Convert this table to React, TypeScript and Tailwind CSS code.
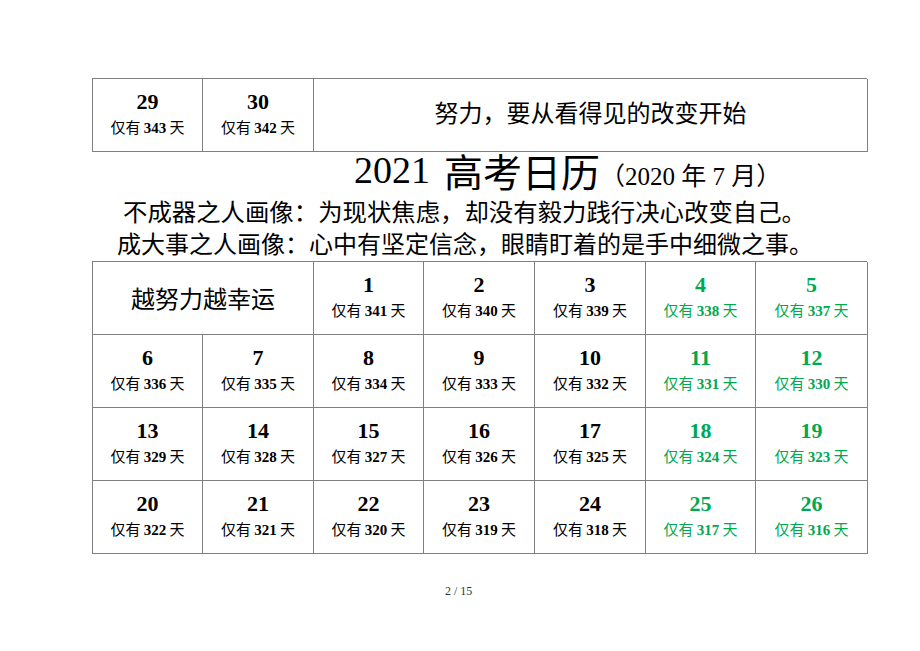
const serif = "font-['Liberation_Serif','Noto_Sans_CJK_SC',serif]";

const GREEN = 'text-[#00a84f]';

type Day = { d: number; left: number; green?: boolean };

function DayCell({ d, left, green }: Day) {
  return (
    <div
      className={`flex h-[73px] flex-col items-center justify-center border-r border-b border-[#808080] ${
        green ? GREEN : 'text-black'
      }`}
    >
      <div className="text-[22px] leading-[25px] font-bold">{d}</div>
      <div className="text-[15px] leading-[25px]">
        <span className="font-['Noto_Sans_CJK_SC',sans-serif]">仅有 </span>
        <span className="font-bold">{left}</span>
        <span className="font-['Noto_Sans_CJK_SC',sans-serif]"> 天</span>
      </div>
    </div>
  );
}

const rows: Day[][] = [
  [
    { d: 6, left: 336 },
    { d: 7, left: 335 },
    { d: 8, left: 334 },
    { d: 9, left: 333 },
    { d: 10, left: 332 },
    { d: 11, left: 331, green: true },
    { d: 12, left: 330, green: true },
  ],
  [
    { d: 13, left: 329 },
    { d: 14, left: 328 },
    { d: 15, left: 327 },
    { d: 16, left: 326 },
    { d: 17, left: 325 },
    { d: 18, left: 324, green: true },
    { d: 19, left: 323, green: true },
  ],
  [
    { d: 20, left: 322 },
    { d: 21, left: 321 },
    { d: 22, left: 320 },
    { d: 23, left: 319 },
    { d: 24, left: 318 },
    { d: 25, left: 317, green: true },
    { d: 26, left: 316, green: true },
  ],
];

export default function App() {
  return (
    <div className={`h-[651px] w-[920px] bg-white pt-[78px] ${serif}`}>
      <div className="ml-[92px] w-[775px]">
        {/* top row carried over from the previous month */}
        <div className="grid grid-cols-[110px_111px_554px] border-t border-l border-[#808080]">
          <DayCell d={29} left={343} />
          <DayCell d={30} left={342} />
          <div className="flex h-[73px] items-center justify-center border-r border-b border-[#808080] pb-[6px] font-['Noto_Sans_CJK_SC',sans-serif] text-[24px] leading-none text-black">
            努力，要从看得见的改变开始
          </div>
        </div>

        <div className="flex h-[44px] items-center pb-[8px] pl-[262px] text-black">
          <span className="text-[38px] leading-none">2021</span>
          <span className="ml-[14px] font-['Noto_Sans_CJK_SC',sans-serif] text-[39px] leading-none">高考日历</span>
          <span className="mt-[10px] text-[25px] leading-none">
            <span className="font-['Noto_Sans_CJK_SC',sans-serif]">（</span>2020{' '}
            <span className="font-['Noto_Sans_CJK_SC',sans-serif]">年</span> 7{' '}
            <span className="font-['Noto_Sans_CJK_SC',sans-serif]">月）</span>
          </span>
        </div>
        <div className="h-[32px] pl-[31px] font-['Noto_Sans_CJK_SC',sans-serif] text-[24.4px] leading-[30px] text-black">
          不成器之人画像：为现状焦虑，却没有毅力践行决心改变自己。
        </div>
        <div className="h-[33px] pl-[25px] font-['Noto_Sans_CJK_SC',sans-serif] text-[24px] leading-[30px] text-black">
          成大事之人画像：心中有坚定信念，眼睛盯着的是手中细微之事。
        </div>

        <div className="grid grid-cols-[110px_111px_110px_111px_111px_110px_112px] border-t border-l border-[#808080]">
          <div className="col-span-2 flex h-[73px] items-center justify-center border-r border-b border-[#808080] font-['Noto_Sans_CJK_SC',sans-serif] text-[24px] text-black">
            越努力越幸运
          </div>
          <DayCell d={1} left={341} />
          <DayCell d={2} left={340} />
          <DayCell d={3} left={339} />
          <DayCell d={4} left={338} green />
          <DayCell d={5} left={337} green />
          {rows.flat().map((day) => (
            <DayCell key={day.d} {...day} />
          ))}
        </div>

        <div className="mt-[28px] pl-[353px] text-[12px] text-[#333]">2 / 15</div>
      </div>
    </div>
  );
}
